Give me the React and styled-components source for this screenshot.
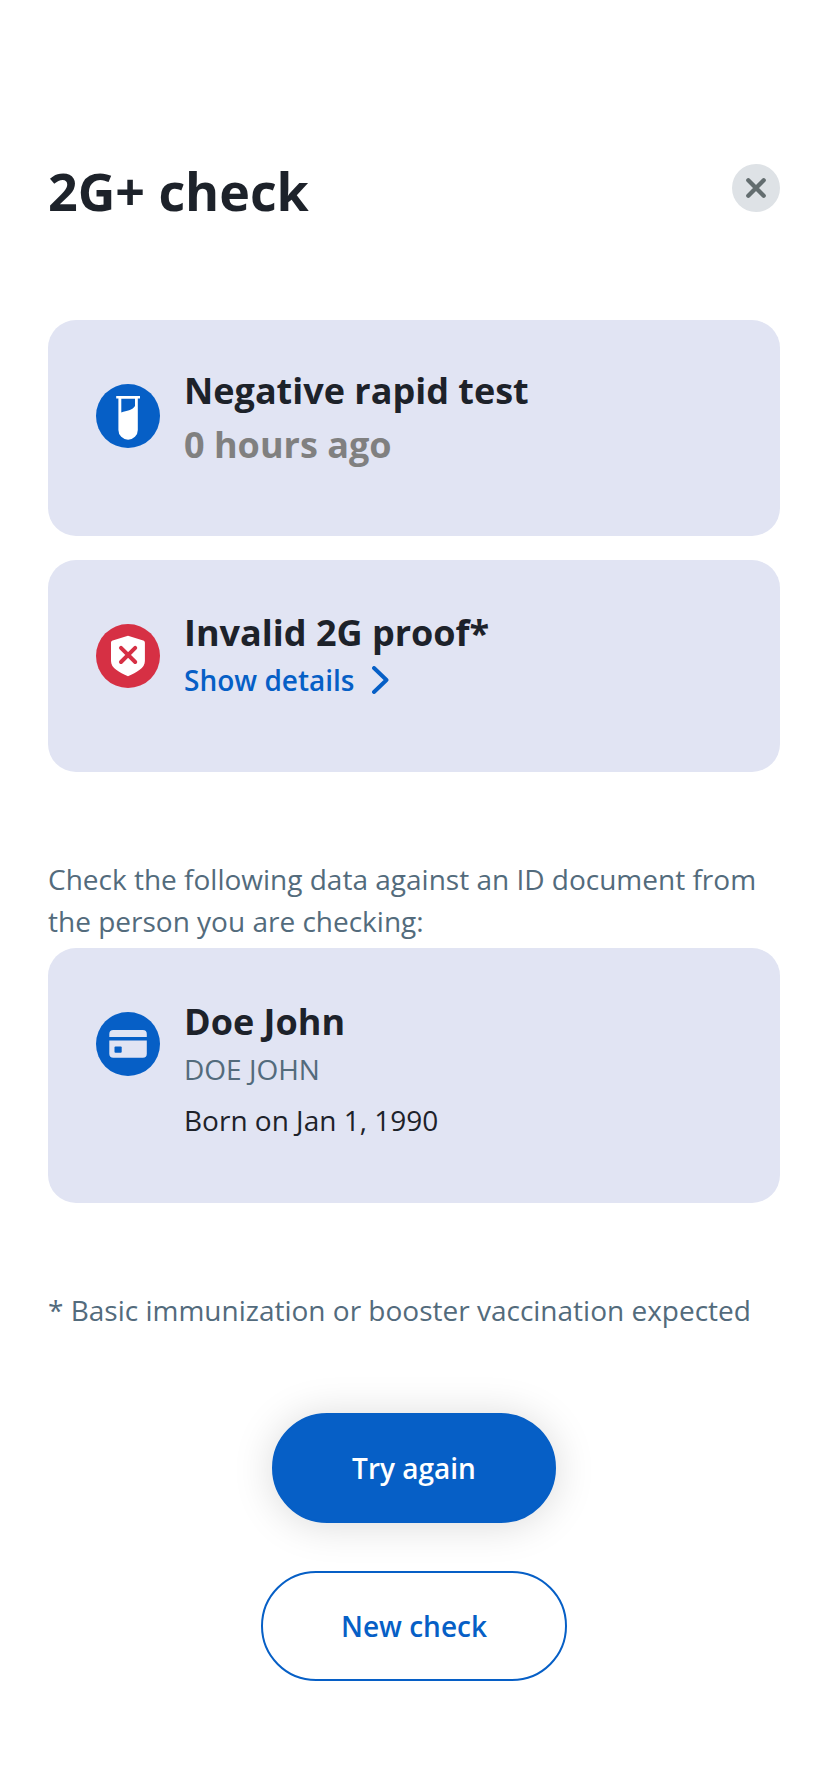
import React from "react";
import styled, { createGlobalStyle } from "styled-components";

const Global = createGlobalStyle`
  * { box-sizing: border-box; }
  body { margin: 0; background: #fff; font-family: "Open Sans", "Noto Sans", sans-serif; }
  h1, h2, p { margin: 0; }
  button { font: inherit; cursor: pointer; }
`;

const Page = styled.main`
  display: flex;
  flex-direction: column;
  width: 828px;
  height: 1792px;
  padding: 155px 48px 0;
  background: #fff;
  overflow: hidden;
`;

const Header = styled.header`
  display: flex;
  justify-content: space-between;
  align-items: flex-start;
  height: 165px;
`;

const PageTitle = styled.h1`
  font-size: 52px;
  line-height: 72px;
  font-weight: 700;
  letter-spacing: -0.05px;
  color: #1d222a;
`;

const CloseButton = styled.button`
  display: flex;
  align-items: center;
  justify-content: center;
  width: 48px;
  height: 48px;
  margin-top: 9px;
  padding: 0;
  border: 0;
  border-radius: 50%;
  background: #dee2e6;
`;

const CardList = styled.section`
  display: flex;
  flex-direction: column;
  gap: 24px;
`;

const Card = styled.article`
  display: flex;
  align-items: flex-start;
  gap: 24px;
  height: ${(p) => p.$height}px;
  padding: 0 48px;
  border-radius: 28px;
  background: #e1e4f3;
`;

const IconSvg = styled.svg`
  flex: none;
  width: 64px;
  height: 64px;
  margin-top: 64px;
`;

const CardBody = styled.div`
  display: flex;
  flex-direction: column;
  align-items: flex-start;
  padding-top: ${(p) => p.$top}px;
`;

const CardTitle = styled.h2`
  font-size: 36px;
  line-height: 50px;
  font-weight: 700;
  color: #1d222a;
  white-space: nowrap;
`;

const Elapsed = styled.p`
  font-size: 36px;
  line-height: 58px;
  font-weight: 700;
  color: #808080;
`;

const DetailsLink = styled.button`
  display: flex;
  align-items: center;
  gap: 17px;
  padding: 0;
  border: 0;
  background: none;
  color: #065fc6;
  && { font-size: 28px; line-height: 44px; font-weight: 600; }
`;

const Transliteration = styled.p`
  font-size: 28px;
  line-height: 44px;
  color: #536b7c;
`;

const BirthDate = styled.p`
  font-size: 28px;
  line-height: 58px;
  color: #1d222a;
`;

const Note = styled.p`
  margin: ${(p) => p.$margin};
  font-size: 28px;
  line-height: 42px;
  color: #536b7c;
`;

const Actions = styled.div`
  display: flex;
  flex-direction: column;
  align-items: center;
  gap: 48px;
`;

const ActionButton = styled.button`
  width: ${(p) => p.$width}px;
  height: 110px;
  padding: 0;
  border-radius: 55px;
  border: 2px solid #065fc6;
  background: ${(p) => (p.$primary ? "#065fc6" : "#fff")};
  color: ${(p) => (p.$primary ? "#fff" : "#065fc6")};
  box-shadow: ${(p) => (p.$primary ? "0 2px 40px rgba(0, 0, 0, 0.15)" : "none")};
  && { font-size: 28px; font-weight: 600; }
`;

const TestTubeIcon = () => (
  <IconSvg viewBox="0 0 64 64">
    <circle cx="32" cy="32" r="32" fill="#065fc6" />
    <path d="M20.2 11.9h23.8v2.6h-2.2V46a9.7 9.7 0 0 1-19.400 0V14.500h-2.200z" fill="#fff" />
    <path d="M25.300 14.800h13.700v7.200c-3 5-8 4-13.700 6.500z" fill="#065fc6" />
  </IconSvg>
);

const InvalidShieldIcon = () => (
  <IconSvg viewBox="0 0 64 64">
    <circle cx="32" cy="32" r="32" fill="#d63044" />
    <path d="M32 11.800l15.200 4.800c1 .3 1.700 1.100 1.700 2.100V37c0 7.400-8.200 11.200-16.900 15.200C23.300 48.200 15 44.400 15 37V18.700c0-1 .7-1.800 1.700-2.100z" fill="#fff" />
    <path d="M25 23.800l14.200 14.200M39.200 23.800L25 38" stroke="#d63044" strokeWidth="4" strokeLinecap="round" />
  </IconSvg>
);

const IdCardIcon = () => (
  <IconSvg viewBox="0 0 64 64">
    <circle cx="32" cy="32" r="32" fill="#065fc6" />
    <rect x="13.300" y="18" width="37.500" height="27.800" rx="4" fill="#e1e4f3" />
    <path d="M13 25h38v3.600H13z" fill="#065fc6" />
    <rect x="18.500" y="34.500" width="7.200" height="6.200" rx="1" fill="#065fc6" />
  </IconSvg>
);

export default function App() {
  return (
    <>
      <Global />
      <Page>
        <Header>
          <PageTitle>2G+ check</PageTitle>
          <CloseButton aria-label="Close">
            <svg width="20" height="20" viewBox="0 0 20 20">
              <path d="M2.300 2.300l15.400 15.400M17.700 2.300L2.300 17.700" stroke="#636d6f" strokeWidth="4.300" strokeLinecap="round" />
            </svg>
          </CloseButton>
        </Header>
        <CardList>
          <Card $height={216}>
            <TestTubeIcon />
            <CardBody $top={46}>
              <CardTitle>Negative rapid test</CardTitle>
              <Elapsed>0 hours ago</Elapsed>
            </CardBody>
          </Card>
          <Card $height={212}>
            <InvalidShieldIcon />
            <CardBody $top={48}>
              <CardTitle>Invalid 2G proof*</CardTitle>
              <DetailsLink>
                Show details
                <svg width="17" height="28" viewBox="0 0 17 28" fill="none">
                  <path d="M2 2l12.500 12L2 26" stroke="#065fc6" strokeWidth="3.900" strokeLinecap="round" strokeLinejoin="round" />
                </svg>
              </DetailsLink>
            </CardBody>
          </Card>
        </CardList>
        <Note $margin="86px 0 6px">
          Check the following data against an ID document from the person you are checking:
        </Note>
        <Card $height={255}>
          <IdCardIcon />
          <CardBody $top={49}>
            <CardTitle>Doe John</CardTitle>
            <Transliteration>DOE JOHN</Transliteration>
            <BirthDate>Born on Jan 1, 1990</BirthDate>
          </CardBody>
        </Card>
        <Note $margin="86px 0 82px">* Basic immunization or booster vaccination expected</Note>
        <Actions>
          <ActionButton $primary $width={284}>Try again</ActionButton>
          <ActionButton $width={306}>New check</ActionButton>
        </Actions>
      </Page>
    </>
  );
}
